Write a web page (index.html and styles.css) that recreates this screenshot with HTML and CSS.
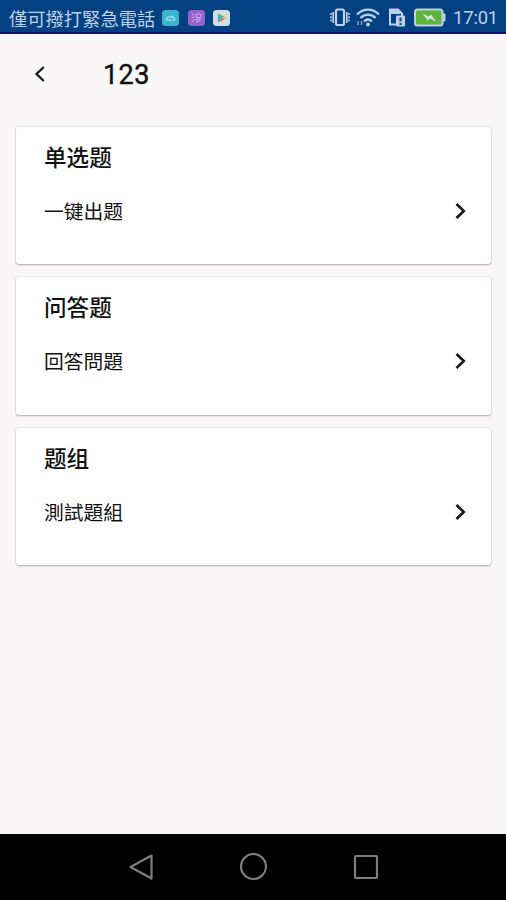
FILE: index.html
```html
<!DOCTYPE html>
<html lang="zh">
<head>
<meta charset="utf-8">
<meta name="viewport" content="width=device-width, initial-scale=1">
<title>123</title>
<link rel="stylesheet" href="styles.css">
</head>
<body>
<div class="screen">
  <div class="status">
    <span class="carrier">僅可撥打緊急電話</span>
    <div class="notices">
      <svg width="17" height="16" viewBox="0 0 17 16"><rect width="17" height="16" rx="3.500" fill="#3db3cb"/><path d="M3.500 11c0-4 2-5.500 3.500-4.500 3-2 6.500 0 6.500 4.500z" fill="#8bdbe8"/><path d="M5.500 9.500 8 8l2 1.500 2-1" fill="none" stroke="#3db3cb" stroke-width="1.200"/></svg>
      <svg width="17" height="16" viewBox="0 0 17 16"><rect width="17" height="16" rx="3.500" fill="#9463cf"/><path d="M4 4.500h2M4 7.500h2M4 12l3-3M8 4h5v3.500H8zM8 9h5M12 9c0 2-1 3-4 3M9 9v3" fill="none" stroke="#c9a9e9" stroke-width="1"/></svg>
      <svg width="17" height="16" viewBox="0 0 17 16"><rect width="17" height="16" rx="3.500" fill="#d2dcdc"/><path d="M5 3.500v9L9 8z" fill="#35b5d5"/><path d="M5 3.500 9 8l2-1.500z" fill="#4fae68"/><path d="M5 12.500 9 8l2 1.500z" fill="#df5a60"/><path d="m9 8 2-1.500L13 8l-2 1.500z" fill="#e8b53c"/></svg>
    </div>
    <div class="system">
      <svg class="vibrate" width="20" height="19" viewBox="0 0 20 19" fill="none" stroke="#bdd0e8"><rect x="6" y="1.500" width="8" height="15.500" rx="1.500" stroke-width="2.200"/><path d="M3.200 4v11M16.800 4v11" stroke-width="1.600"/><path d="M1 5v9M19 5v9" stroke-width="1.600" stroke-dasharray="2 1.300"/></svg>
      <svg class="wifi" width="24" height="19" viewBox="0 0 24 19" fill="none" stroke="#bdd0e8" stroke-width="2.400"><path d="M1 6.500c6.500-6.500 15.500-6.500 22 0M4.500 10c4.500-4.500 10.500-4.500 15 0M8 13.500c2.500-2.500 5.500-2.500 8 0"/><circle cx="12" cy="16.500" r="1.900" fill="#bdd0e8" stroke="none"/><path d="M2 13v4M5.500 13v4" stroke-width="1.400" opacity=".7"/></svg>
      <svg class="sim" width="18" height="19" viewBox="0 0 18 19"><path d="M8 16.500H2v-15h8l4 4V8" fill="none" stroke="#bdd0e8" stroke-width="2"/><path d="M3 2h7l3 4H3z" fill="#bdd0e8"/><rect x="8" y="7.500" width="9" height="11" rx="1" fill="#bdd0e8"/><path d="M12.500 9.500v4M12.500 15v2" stroke="#0b4484" stroke-width="2"/></svg>
      <svg class="battery" width="32" height="19" viewBox="0 0 32 19"><rect x="1" y="1.500" width="27.500" height="16" rx="2.500" fill="#5db53e" stroke="#bdd0e8" stroke-width="2"/><path d="M29 5.500h1.500q1 0 1 1v6q0 1-1 1H29z" fill="#bdd0e8"/><path d="m8.500 5.500 6 3 2.500-2 5 7-6-3-2.500 2z" fill="#d7e8df"/></svg>
      <span class="time">17:01</span>
    </div>
  </div>
  <header class="header">
    <svg class="back" width="14" height="18" viewBox="0 0 14 18"><path d="M11.800 2 4.500 9l7.300 7" fill="none" stroke="#1b1b1b" stroke-width="2.300"/></svg>
    <h1>123</h1>
  </header>
  <main class="list">
    <section class="card">
      <div><h2>单选题</h2><p>一键出题</p></div>
      <svg class="next" width="14" height="18" viewBox="0 0 14 18"><path d="m3.500 2 7.300 7-7.300 7" fill="none" stroke="#171717" stroke-width="2.600"/></svg>
    </section>
    <section class="card">
      <div><h2>问答题</h2><p>回答問題</p></div>
      <svg class="next" width="14" height="18" viewBox="0 0 14 18"><path d="m3.500 2 7.300 7-7.300 7" fill="none" stroke="#171717" stroke-width="2.600"/></svg>
    </section>
    <section class="card">
      <div><h2>题组</h2><p class="trad">測試題組</p></div>
      <svg class="next" width="14" height="18" viewBox="0 0 14 18"><path d="m3.500 2 7.300 7-7.300 7" fill="none" stroke="#171717" stroke-width="2.600"/></svg>
    </section>
  </main>
  <nav class="nav">
    <svg width="28" height="28" viewBox="0 0 28 28"><path d="M24.500 2.500 3.500 14l21 11.500z" stroke-linejoin="round"/></svg>
    <svg width="28" height="28" viewBox="0 0 28 28"><circle cx="14.500" cy="13.500" r="12.500"/></svg>
    <svg width="28" height="28" viewBox="0 0 28 28"><rect x="3" y="3" width="22" height="22" rx="1"/></svg>
  </nav>
</div>
</body>
</html>
```

FILE: styles.css
```css
* { box-sizing: border-box; }

body {
  margin: 0;
  background: #f8f6f7;
  color: #111;
  font-family: Roboto, "Noto Sans CJK SC", sans-serif;
}

.screen {
  display: flex;
  flex-direction: column;
  height: 900px;
}

.status {
  display: flex;
  align-items: center;
  flex: none;
  height: 34px;
  padding: 3px 9px 0;
  background: #034183;
  border-bottom: 2px solid #10106f;
  color: #bdd0e8;
  line-height: 24px;
}

.status svg,
.header svg,
.card svg,
.nav svg { display: block; flex: none; }

.carrier {
  width: 147px;
  font-family: "Noto Sans CJK TC", sans-serif;
  font-size: 18.3px;
  white-space: nowrap;
}

.notices {
  display: flex;
  gap: 8.5px;
  margin-left: 6px;
}

.system {
  display: flex;
  align-items: center;
  margin-left: auto;
}

.wifi { margin-left: 6px; }
.sim { margin-left: 8px; }
.battery { margin-left: 8px; }

.time {
  width: 44px;
  margin-left: 7px;
  font-size: 18.5px;
  letter-spacing: -.2px;
  white-space: nowrap;
}

.header {
  display: flex;
  align-items: center;
  flex: none;
  height: 92.5px;
  padding: 0 32px 12.5px;
}

h1 {
  margin: 2px 0 0 57px;
  font-size: 27px;
  font-weight: 400;
  letter-spacing: .4px;
  line-height: 32px;
  -webkit-text-stroke: .4px #111;
}

.list {
  display: flex;
  flex: 1;
  flex-direction: column;
  gap: 13px;
  padding: 0 15px 0 16px;
}

.card {
  display: flex;
  justify-content: space-between;
  height: 137.5px;
  padding: 16px 24px 0 28px;
  background: #fff;
  border-radius: 3px;
  box-shadow: 0 1px 2px rgba(0, 0, 0, .28), 0 0 2px rgba(0, 0, 0, .14);
}

h2 {
  margin: 0;
  font-size: 22.6px;
  font-weight: 500;
  line-height: 32px;
}

p {
  margin: 24px 0 0;
  font-size: 19.8px;
  font-weight: 400;
  line-height: 28px;
}

.trad {
  margin-top: 22px;
  font-family: "Noto Sans CJK TC", sans-serif;
}

.next { margin-top: 59px; }

.nav {
  display: flex;
  align-items: center;
  justify-content: center;
  flex: none;
  gap: 84.5px;
  height: 66.5px;
  background: #000;
}

.nav svg {
  fill: none;
  stroke: #7e7e7e;
  stroke-width: 2.2;
}
```
